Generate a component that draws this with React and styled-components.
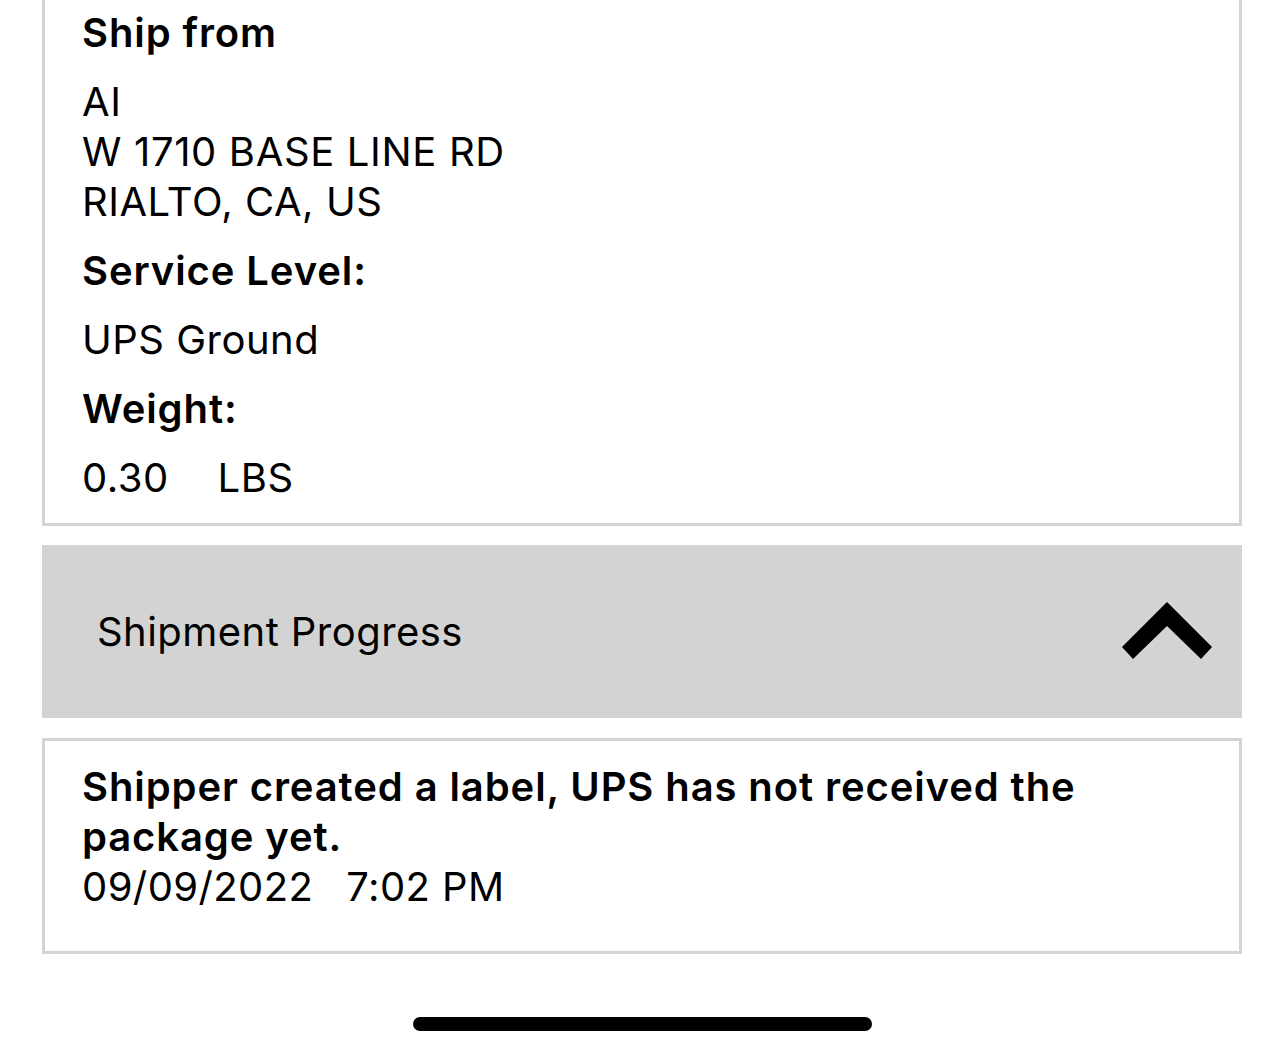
import React from "react";
import styled, { createGlobalStyle } from "styled-components";

const Global = createGlobalStyle`
  html, body { margin: 0; padding: 0; background: #ffffff; }
  body { font-family: Inter, "Liberation Sans", Arial, sans-serif; color: #000; }
`;

const Page = styled.div`
  display: flex;
  flex-direction: column;
  gap: 19px;
  padding: 0 42px 0 42px;
`;

const Card = styled.section`
  border: 3px solid #d4d4d4;
  border-top: ${(p) => (p.$open ? "none" : "3px solid #d4d4d4")};
  padding: ${(p) => p.$pad};
  display: flex;
  flex-direction: column;
  gap: ${(p) => p.$gap || "0px"};
`;

const Label = styled.div`
  font-size: 40px;
  line-height: 50px;
  font-weight: 600;
  letter-spacing: 0.9px;
`;

const Value = styled.div`
  font-size: 40px;
  line-height: 50px;
  font-weight: 400;
  letter-spacing: ${(p) => p.$track || "0.65px"};
  white-space: pre;
`;

const Spaced = styled.span`
  margin-left: ${(p) => p.$gap};
`;

const Header = styled.button`
  all: unset;
  box-sizing: border-box;
  height: 173px;
  background: #d3d3d3;
  display: flex;
  align-items: center;
  justify-content: space-between;
  padding: 0 30px 0 55px;
  margin-bottom: 1px;
`;

const HeaderText = styled.span`
  font-family: Inter, "Liberation Sans", Arial, sans-serif;
  font-size: 40px;
  line-height: 50px;
  letter-spacing: 0.45px;
  color: #000;
`;

const Chevron = styled.svg`
  width: 90px;
  height: 57px;
  display: block;
  margin-bottom: 3px;
`;

const HomeIndicator = styled.div`
  position: fixed;
  left: 413px;
  top: 1017px;
  width: 459px;
  height: 14px;
  border-radius: 7px;
  background: #000;
`;

export default function App() {
  return (
    <>
      <Global />
      <Page>
        <Card $open $pad="8px 20px 20px 37px" $gap="19px">
          <Label>Ship from</Label>
          <div>
            <Value>AI</Value>
            <Value>W 1710 BASE LINE RD</Value>
            <Value $track="0.5px">RIALTO, CA, US</Value>
          </div>
          <Label>Service Level:</Label>
          <Value $track="0.5px">UPS Ground</Value>
          <Label>Weight:</Label>
          <Value $track="0.5px">
            0.30<Spaced $gap="49px">LBS</Spaced>
          </Value>
        </Card>
        <Header>
          <HeaderText>Shipment Progress</HeaderText>
          <Chevron viewBox="0 0 90 57">
            <polygon points="45,0 90,45 79,57 45,24 11,57 0,45" fill="#000" />
          </Chevron>
        </Header>
        <Card $pad="21px 20px 39px 37px">
          <Label>
            Shipper created a label, UPS has not received the
            <br />
            package yet.
          </Label>
          <Value $track="0.4px">
            09/09/2022<Spaced $gap="33px">7:02 PM</Spaced>
          </Value>
        </Card>
      </Page>
      <HomeIndicator />
    </>
  );
}
